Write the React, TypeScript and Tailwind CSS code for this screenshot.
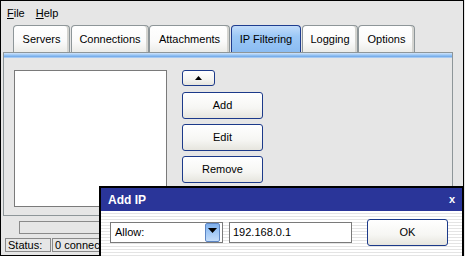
import React from "react";

const font = { fontFamily: "'Liberation Sans', Arial, sans-serif" };

function Tab({ label, w, ml, selected }: { label: string; w: number; ml: number; selected?: boolean }) {
  return (
    <div
      style={{ width: w, marginLeft: ml }}
      className={
        selected
          ? "h-[27px] flex items-center justify-center rounded-t-[4px] border border-b-0 border-[#1f3d8f] bg-[linear-gradient(to_bottom,#c2dcfa,#9cc8f6_40%,#8bbcf2)] text-[11px] text-black"
          : "h-[27px] flex items-center justify-center rounded-t-[4px] border border-b-0 border-[#8e9699] bg-[linear-gradient(to_bottom,#ffffff,#fafafa_60%,#ecece8)] text-[11px] text-black shadow-[inset_-2px_0_0_#d4d4d0]"
      }
    >
      <span className="pt-[1px]">{label}</span>
    </div>
  );
}

function Btn({ label, h = 27, w = 81 }: { label: string; h?: number; w?: number }) {
  return (
    <div
      style={{ width: w, height: h }}
      className="flex items-center justify-center rounded-[3px] border border-[#1c3a8a] bg-[linear-gradient(to_bottom,#ffffff,#f6f6f3_60%,#e6e5de)] text-[11px] text-black"
    >
      {label}
    </div>
  );
}

export default function App() {
  return (
    <div className="w-[465px] h-[256px] bg-[#e6e6e6] relative overflow-hidden" style={font}>
      <div className="w-[464px] h-[256px] border border-black flex flex-col bg-[#e6e6e6]">
        {/* menu */}
        <div className="h-[23px] flex items-center pl-[6px] pt-[2px] gap-[11px] text-[11px] text-black">
          <span>
            <span className="underline">F</span>ile
          </span>
          <span>
            <span className="underline">H</span>elp
          </span>
        </div>
        {/* tabs */}
        <div className="h-[28px] flex items-end pl-[12px]">
          <Tab label="Servers" w={57} ml={0} />
          <Tab label="Connections" w={78} ml={1} />
          <Tab label="Attachments" w={81} ml={0} />
          <Tab label="IP Filtering" w={70} ml={1} selected />
          <Tab label="Logging" w={56} ml={1} />
          <Tab label="Options" w={57} ml={0} />
        </div>
        {/* panel */}
        <div className="ml-[2px] w-[450px] h-[164px] border border-t-0 border-[#8e9699] flex flex-col">
          <div className="h-[1px] bg-[#8e9699]" />
          <div className="h-[5px] bg-[linear-gradient(to_bottom,#d2e5fb,#8fbff2_50%,#7aaee9_70%,#bcd8f7)]" />
          <div className="flex pt-[12px] pl-[10px] gap-[15px]">
            <div className="w-[153px] h-[137px] bg-white border border-[#7a7a7a]" />
            <div className="flex flex-col">
              <div className="w-[33px] h-[16px] flex items-center justify-center rounded-[3px] border border-[#1c3a8a] bg-[linear-gradient(to_bottom,#ffffff,#f4f4f1_60%,#e6e5de)]">
                <svg width="7" height="4" viewBox="0 0 7 4">
                  <path d="M0 4 L3.5 0 L7 4 Z" fill="#000" />
                </svg>
              </div>
              <div className="mt-[6px]">
                <Btn label="Add" />
              </div>
              <div className="mt-[5px]">
                <Btn label="Edit" />
              </div>
              <div className="mt-[5px]">
                <Btn label="Remove" />
              </div>
            </div>
          </div>
        </div>
        {/* bar */}
        <div className="mt-[5px] ml-[18px] w-[420px] h-[13px] border border-[#8a8a8a]" />
        {/* status */}
        <div className="mt-[4px] ml-[4px] flex gap-[1px] text-[11px] text-black">
          <div className="w-[46px] h-[14px] border border-[#8a8a8a] flex items-center pl-[2px]">Status:</div>
          <div className="w-[200px] h-[14px] border border-[#8a8a8a] flex items-center pl-[2px] whitespace-nowrap overflow-hidden">
            0 connections
          </div>
        </div>
      </div>

      {/* dialog */}
      <div className="absolute left-[99px] top-[186px] w-[365px] h-[80px] border-2 border-black flex flex-col">
        <div className="h-[23px] bg-[#2a3599] flex items-center justify-between pl-[7px] pr-[7px] text-white">
          <span className="text-[12px] font-bold pt-[1px]">Add IP</span>
          <span className="text-[11px] font-bold leading-none">x</span>
        </div>
        <div className="flex-1 bg-[repeating-linear-gradient(to_bottom,#ffffff_0px,#ffffff_2px,#e4e4e4_2px,#e4e4e4_3px)] flex items-start pl-[9px] pt-[8px]">
          <div className="mt-[3px] w-[113px] h-[21px] bg-white border border-[#7a7a7a] flex items-center pl-[4px] text-[11px] text-black relative">
            <span>Allow:</span>
            <div className="absolute right-[2px] top-[0px] w-[15px] h-[19px] border border-[#5d86c4] rounded-[2px] bg-[linear-gradient(to_bottom,#7fb0ec,#9ec6f5_45%,#c4ddf9)] flex items-start justify-center pt-[4px]">
              <svg width="9" height="5" viewBox="0 0 9 5">
                <path d="M0 0 L9 0 L4.5 5 Z" fill="#000" />
              </svg>
            </div>
          </div>
          <div className="mt-[3px] ml-[6px] w-[123px] h-[21px] bg-white border border-[#7a7a7a] flex items-center pl-[3px] text-[11px] text-black">
            192.168.0.1
          </div>
          <div className="ml-[15px]">
            <Btn label="OK" />
          </div>
        </div>
      </div>
    </div>
  );
}
